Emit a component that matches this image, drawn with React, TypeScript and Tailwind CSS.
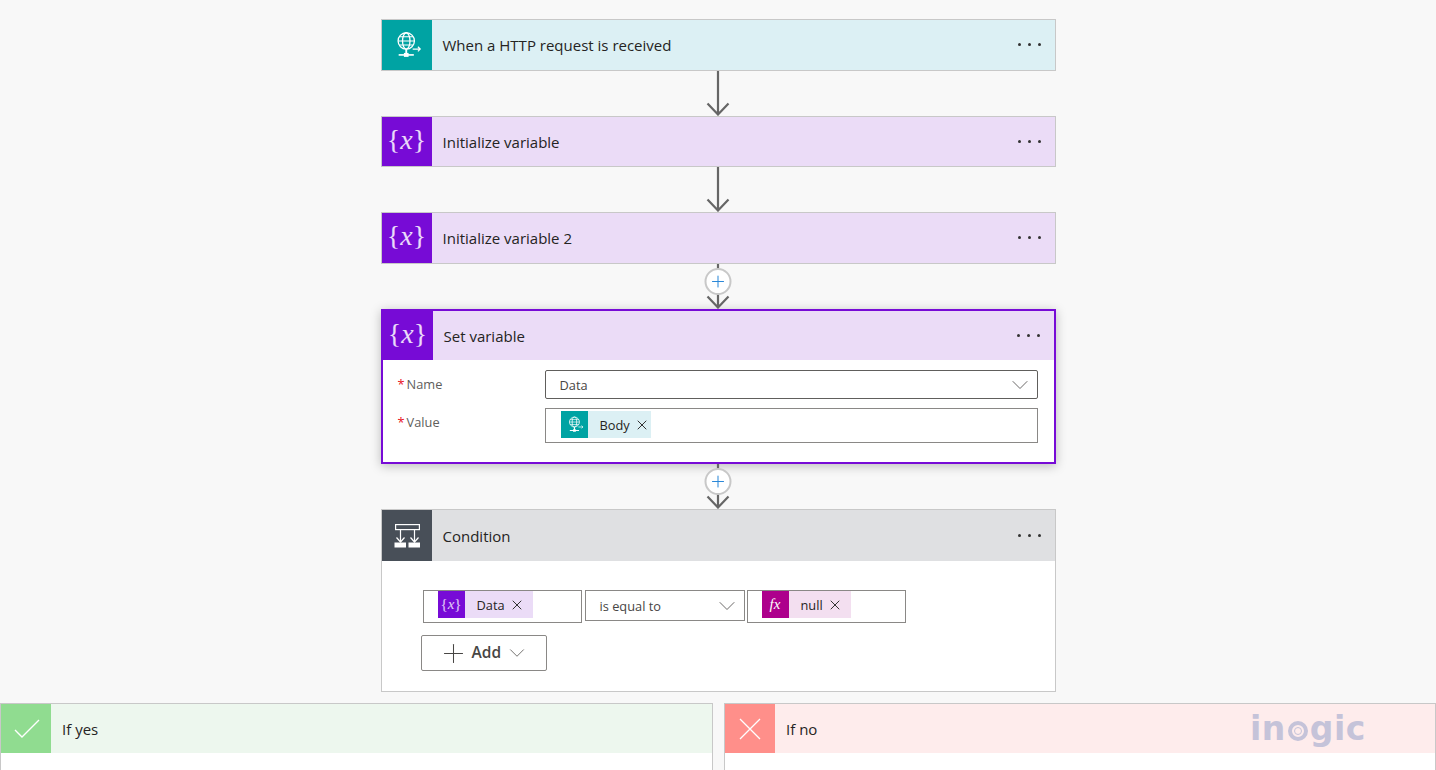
import { ChevronDown, Plus, X } from "lucide-react";
import type { ReactNode } from "react";

const FONT = "font-['Open_Sans','Noto_Sans',sans-serif]";

function GlobeIcon({ size }: { size: number }) {
  return (
    <svg className="translate-x-[1px]" width={size} height={size} viewBox="0 0 24 24" fill="none" stroke="white" strokeWidth="1.1">
      <circle cx="10.5" cy="8.5" r="7" />
      <ellipse cx="10.5" cy="8.5" rx="3.2" ry="7" />
      <path d="M3.5 8.5h14M4.5 5h12M4.5 12h12" strokeWidth="0.9" />
      <path d="M10.5 15.5v5" strokeWidth="1.6" />
      <path d="M4 20.5h13" strokeWidth="1.4" />
      <rect x="8.5" y="18.8" width="4" height="3.4" fill="white" stroke="none" />
      <path d="M16 15.5h6.5M20.5 13.5l2 2-2 2" strokeWidth="1" />
    </svg>
  );
}

function ConditionIcon() {
  return (
    <svg width="28" height="28" viewBox="0 0 28 28" fill="none" stroke="white" strokeWidth="1.2">
      <rect x="2.6" y="2.6" width="23.8" height="5" />
      <path d="M7.5 8v12M21.5 8v12" />
      <path d="M3.5 15.5l4 4.5 4-4.5M17.5 15.5l4 4.5 4-4.5" />
      <rect x="1.5" y="20.5" width="11.5" height="5" fill="white" stroke="none" />
      <rect x="15.5" y="20.5" width="11.5" height="5" fill="white" stroke="none" />
    </svg>
  );
}

function VarGlyph({ size }: { size: "lg" | "sm" }) {
  return (
    <span
      className={
        size === "lg"
          ? "-mt-1 font-['Liberation_Serif',serif] text-[28px] font-light leading-none text-white/85"
          : "font-['Liberation_Serif',serif] text-[15px] leading-none text-white/80"
      }
    >
      {"{"}
      <i>x</i>
      {"}"}
    </span>
  );
}

function Dots() {
  return (
    <div className="mb-[1px] ml-auto mr-[14px] flex gap-[7px]">
      <span className="h-[3px] w-[3px] rounded-full bg-[#333]" />
      <span className="h-[3px] w-[3px] rounded-full bg-[#333]" />
      <span className="h-[3px] w-[3px] rounded-full bg-[#333]" />
    </div>
  );
}

function Header({ icon, color, bg, title, h }: { icon: ReactNode; color: string; bg: string; title: string; h?: string }) {
  return (
    <div className={`flex items-center ${h ?? "h-[50px]"} ${bg}`}>
      <div className={`flex h-full w-[50px] shrink-0 items-center justify-center ${color}`}>{icon}</div>
      <span className={`ml-[11px] text-[15px] text-[#252423] ${h ? "pt-[2px]" : ""}`}>{title}</span>
      <Dots />
    </div>
  );
}

function Arrow({ plus }: { plus?: boolean }) {
  return (
    <div className="relative h-[45px] w-[675px] shrink-0">
      <svg className="mx-auto block" width="24" height="45" viewBox="0 0 24 45" fill="none" stroke="#666" strokeWidth="2.2">
        <path d="M12 0v44M1.5 32.5L12 43.5 22.5 32.5" />
      </svg>
      {plus && (
        <div className="absolute left-1/2 top-[4px] flex h-[27px] w-[27px] -translate-x-1/2 items-center justify-center rounded-full border-2 border-[#c8c8c8] bg-white">
          <Plus size={19} strokeWidth={1.3} className="text-[#2b88d8]" />
        </div>
      )}
    </div>
  );
}

function Token({ icon, color, bg, label, width }: { icon: ReactNode; color: string; bg: string; label: string; width: string }) {
  return (
    <div className={`flex h-[27px] items-center ${bg} ${width}`}>
      <div className={`flex h-full w-[27px] shrink-0 items-center justify-center ${color}`}>{icon}</div>
      <span className="ml-[12px] pt-[2px] text-[12.8px] text-[#252423]">{label}</span>
      <X size={16} strokeWidth={1.5} className="ml-[4px] mt-[1px] text-[#333]" />
    </div>
  );
}

function SimpleCard({ icon, color, bg, title, h }: { icon: ReactNode; color: string; bg: string; title: string; h?: string }) {
  return (
    <div className="w-[675px] shrink-0 border border-[#c8c8c8]">
      <Header icon={icon} color={color} bg={bg} title={title} h={h} />
    </div>
  );
}

function Branch({ icon, color, bg, title, className }: { icon: ReactNode; color: string; bg: string; title: string; className: string }) {
  return (
    <div className={`h-[67px] border border-b-0 border-[#c8c8c8] bg-white ${className}`}>
      <div className={`flex h-[49px] items-center ${bg}`}>
        <div className={`flex h-full w-[50px] shrink-0 items-center justify-center ${color}`}>{icon}</div>
        <span className="ml-[11px] pt-[2px] text-[15px] text-[#252423]">{title}</span>
      </div>
    </div>
  );
}

export default function App() {
  return (
    <div className={`relative flex h-[770px] flex-col items-center overflow-hidden bg-[#f8f8f8] pt-[19px] ${FONT}`}>
      <SimpleCard icon={<GlobeIcon size={28} />} color="bg-[#00a3a3]" bg="bg-[#dcf0f4]" title="When a HTTP request is received" />
      <Arrow />
      <SimpleCard icon={<VarGlyph size="lg" />} color="bg-[#770bd6]" bg="bg-[#ebdcf7]" title="Initialize variable" h="h-[49px]" />
      <Arrow />
      <SimpleCard icon={<VarGlyph size="lg" />} color="bg-[#770bd6]" bg="bg-[#ebdcf7]" title="Initialize variable 2" />
      <Arrow plus />

      {/* Set variable, expanded */}
      <div className="w-[675px] shrink-0 border-2 border-[#770bd6] bg-white shadow-[0_2px_10px_rgba(0,0,0,0.25)]">
        <Header icon={<VarGlyph size="lg" />} color="bg-[#770bd6]" bg="bg-[#ebdcf7]" title="Set variable" h="h-[49px]" />
        <div className="h-[102px] pl-[15px] pr-[16px] pt-[10px]">
          <div className="flex">
            <div className="w-[147px] pt-[5px] text-[12.8px] text-[#605e5c]">
              <span className="mr-[2px] text-[#e81123]">*</span>Name
            </div>
            <div className="flex h-[29px] flex-1 items-center justify-between rounded-[2px] border border-[#605e5c] pl-[14px] pr-[3px] text-[12.8px] text-[#484644]">
              <span className="pt-[3px]">Data</span>
              <ChevronDown size={28} strokeWidth={0.8} className="text-[#605e5c]" />
            </div>
          </div>
          <div className="mt-[9px] flex">
            <div className="w-[147px] pt-[5px] text-[12.8px] text-[#605e5c]">
              <span className="mr-[2px] text-[#e81123]">*</span>Value
            </div>
            <div className="h-[35px] flex-1 border border-[#8a8886] pl-[15px] pt-[2px]">
              <Token icon={<GlobeIcon size={17} />} color="bg-[#00a3a3]" bg="bg-[#dcf0f4]" label="Body" width="w-[90px]" />
            </div>
          </div>
        </div>
      </div>
      <Arrow plus />

      {/* Condition */}
      <div className="w-[675px] shrink-0 border border-[#c8c8c8] bg-white">
        <Header icon={<ConditionIcon />} color="bg-[#484f58]" bg="bg-[#dfe0e2]" title="Condition" h="h-[51px]" />
        <div className="h-[130px] pl-[41px] pt-[29px]">
          <div className="flex items-start">
            <div className="h-[33px] w-[159px] border border-[#8a8886] pl-[14px]">
              <Token icon={<VarGlyph size="sm" />} color="bg-[#770bd6]" bg="bg-[#ebdcf7]" label="Data" width="w-[95px]" />
            </div>
            <div className="ml-[3px] flex h-[31px] w-[160px] items-center justify-between border border-[#8a8886] pl-[14px] pr-[3px] text-[12.8px] text-[#484644]">
              <span className="pt-[2px]">is equal to</span>
              <ChevronDown size={28} strokeWidth={0.8} className="text-[#605e5c]" />
            </div>
            <div className="ml-[2px] h-[33px] w-[159px] border border-[#8a8886] pl-[14px]">
              <Token
                icon={<i className="font-['Liberation_Serif',serif] text-[15px] text-white">fx</i>}
                color="bg-[#ad008c]"
                bg="bg-[#f3dff0]"
                label="null"
                width="w-[89px]"
              />
            </div>
          </div>
          <div className="-ml-[2px] mt-[12px] flex h-[36px] w-[126px] items-center rounded-[2px] border border-[#8a8886] pl-[16px]">
            <Plus size={31} strokeWidth={0.8} className="shrink-0 text-[#484644]" />
            <span className="ml-[3px] text-[15.5px] font-semibold text-[#484644]">Add</span>
            <ChevronDown size={26} strokeWidth={0.8} className="ml-[3px] shrink-0 text-[#605e5c]" />
          </div>
        </div>
      </div>

      {/* Branches */}
      <div className="mt-[11px] flex w-full justify-between">
        <Branch
          className="w-[713px]"
          icon={
            <svg className="translate-x-[1px]" width="28" height="22" viewBox="0 0 28 22" fill="none" stroke="white" strokeWidth="1.4">
              <path d="M2 12l7 7L26 2" />
            </svg>
          }
          color="bg-[#90dc90]"
          bg="bg-[#edf7ee]"
          title="If yes"
        />
        <Branch
          className="w-[712px]"
          icon={
            <svg width="22" height="22" viewBox="0 0 22 22" fill="none" stroke="white" strokeWidth="1.3">
              <path d="M1 1l20 20M21 1L1 21" />
            </svg>
          }
          color="bg-[#ff8f8a]"
          bg="bg-[#feecec]"
          title="If no"
        />
      </div>

      {/* Watermark */}
      <div className="absolute left-[1250px] top-[707px] flex items-center font-['DejaVu_Sans',sans-serif] text-[33px] font-bold leading-[44px] tracking-[0.5px] text-[#c5c3d9]">
        in
        <span className="mx-[2px] mt-[4px] flex h-[20px] w-[20px] items-center justify-center rounded-full border-[4px] border-[#c5c3d9]">
          <span className="h-[8px] w-[8px] rounded-full border border-[#c5c3d9]" />
        </span>
        gic
      </div>
    </div>
  );
}
